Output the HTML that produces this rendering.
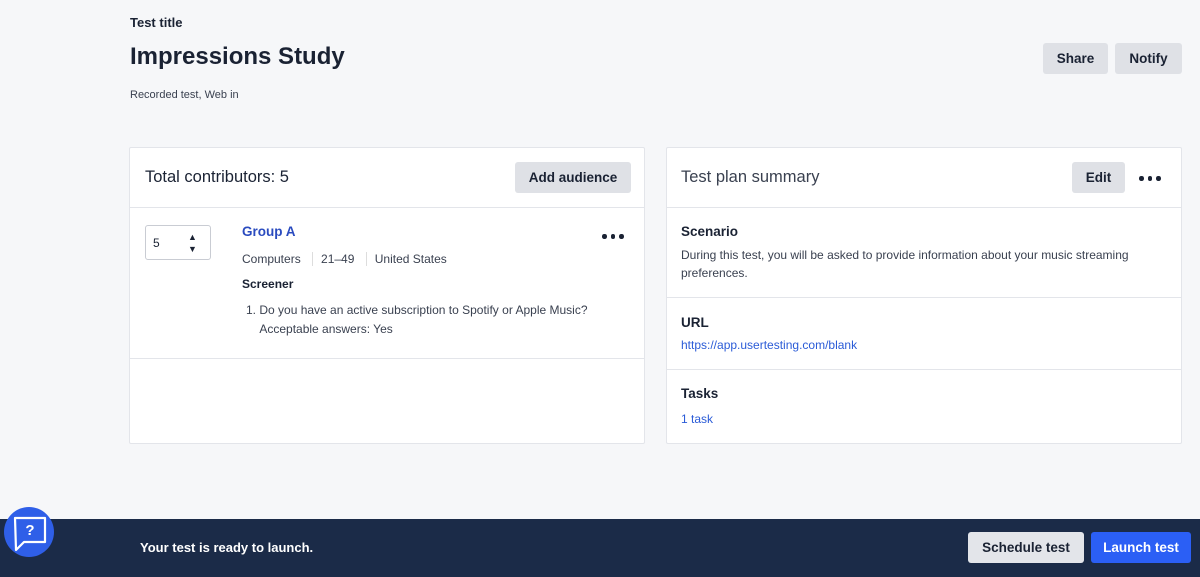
<!DOCTYPE html>
<html><head><meta charset="utf-8"><style>
*{box-sizing:border-box;margin:0;padding:0}
body{width:1200px;height:577px;background:#f6f7f9;font-family:"Liberation Sans",sans-serif;color:#1a2233;position:relative;overflow:hidden}
.abs{position:absolute}
.btn{position:absolute;background:#dfe1e6;border-radius:3px;font-weight:bold;font-size:13.5px;display:flex;align-items:center;justify-content:center;color:#1a2233}
.card{position:absolute;background:#fff;border:1px solid #e3e5ea;border-radius:2px}
.dots{position:absolute;display:flex;gap:4px}
.dots i{width:4.5px;height:4.5px;border-radius:50%;background:#1a2233;display:block}
.sm{font-size:12px;color:#3a4150}
a{color:#2a5bd7;text-decoration:none}
</style></head><body>
<div class="abs" style="left:130px;top:15px;font-size:13px;font-weight:bold">Test title</div>
<div class="abs" style="left:130px;top:43px;font-size:24px;font-weight:bold">Impressions Study</div>
<div class="abs sm" style="left:130px;top:89px;font-size:11px">Recorded test, Web in</div>
<div class="btn" style="left:1043px;top:43px;width:65px;height:31px">Share</div>
<div class="btn" style="left:1115px;top:43px;width:67px;height:31px">Notify</div>

<div class="card" style="left:129px;top:147px;width:516px;height:297px">
 <div class="abs" style="left:15px;top:20px;font-size:16.5px">Total contributors: 5</div>
 <div class="btn" style="left:385px;top:14px;width:116px;height:31px">Add audience</div>
 <div class="abs" style="left:0;top:59px;width:100%;border-top:1px solid #e3e5ea"></div>
 <div class="abs" style="left:15px;top:77px;width:66px;height:35px;border:1px solid #c9ccd3;border-radius:3px;font-size:12px;padding:10px 7px">5<span class="abs" style="left:42px;top:5px;font-size:9px;line-height:12px">▲<br>▼</span></div>
 <div class="abs" style="left:112px;top:76px;font-size:13.5px;font-weight:bold;color:#2a4bbf">Group A</div>
 <div class="abs sm" style="left:112px;top:104px">Computers <span style="border-left:1px solid #ddd;margin:0 8px"></span>21–49 <span style="border-left:1px solid #ddd;margin:0 8px"></span>United States</div>
 <div class="abs" style="left:112px;top:129px;font-size:12px;font-weight:bold">Screener</div>
 <div class="abs sm" style="left:116px;top:153px;line-height:19px">1. Do you have an active subscription to Spotify or Apple Music?<br>&nbsp;&nbsp;&nbsp;&nbsp;Acceptable answers: Yes</div>
 <div class="dots" style="left:472px;top:86px"><i></i><i></i><i></i></div>
 <div class="abs" style="left:0;top:210px;width:100%;border-top:1px solid #e3e5ea"></div>
</div>

<div class="card" style="left:666px;top:147px;width:516px;height:297px">
 <div class="abs" style="left:14px;top:20px;font-size:16.5px;color:#3a4150">Test plan summary</div>
 <div class="btn" style="left:405px;top:14px;width:53px;height:31px">Edit</div>
 <div class="dots" style="left:472px;top:28px"><i></i><i></i><i></i></div>
 <div class="abs" style="left:0;top:59px;width:100%;border-top:1px solid #e3e5ea"></div>
 <div class="abs" style="left:14px;top:76px;font-size:13.5px;font-weight:bold">Scenario</div>
 <div class="abs sm" style="left:14px;top:98px;line-height:18px;width:480px">During this test, you will be asked to provide information about your music streaming preferences.</div>
 <div class="abs" style="left:0;top:149px;width:100%;border-top:1px solid #e3e5ea"></div>
 <div class="abs" style="left:14px;top:167px;font-size:13.5px;font-weight:bold">URL</div>
 <div class="abs sm" style="left:14px;top:190px"><a>https://app.usertesting.com/blank</a></div>
 <div class="abs" style="left:0;top:221px;width:100%;border-top:1px solid #e3e5ea"></div>
 <div class="abs" style="left:14px;top:238px;font-size:13.5px;font-weight:bold">Tasks</div>
 <div class="abs sm" style="left:14px;top:264px"><a>1 task</a></div>
</div>

<div class="abs" style="left:0;top:519px;width:1200px;height:58px;background:#1b2b48"></div>
<div class="abs" style="left:140px;top:540px;font-size:13px;font-weight:bold;color:#fff">Your test is ready to launch.</div>
<div class="btn" style="left:968px;top:532px;width:116px;height:31px;background:#e3e5ea">Schedule test</div>
<div class="btn" style="left:1091px;top:532px;width:100px;height:31px;background:#2b5ff5;color:#fff">Launch test</div>
<div class="abs" style="left:4px;top:507px;width:50px;height:50px;border-radius:50%;background:#2f5fe8"></div>
<svg class="abs" style="left:4px;top:507px" width="50" height="50" viewBox="0 0 50 50"><path d="M11 11h30v24H20l-8 8z" fill="none" stroke="#fff" stroke-width="2.2" stroke-linejoin="round"/><text x="26" y="28" fill="#fff" font-size="15" font-weight="bold" text-anchor="middle" font-family="Liberation Sans">?</text></svg>
</body></html>
